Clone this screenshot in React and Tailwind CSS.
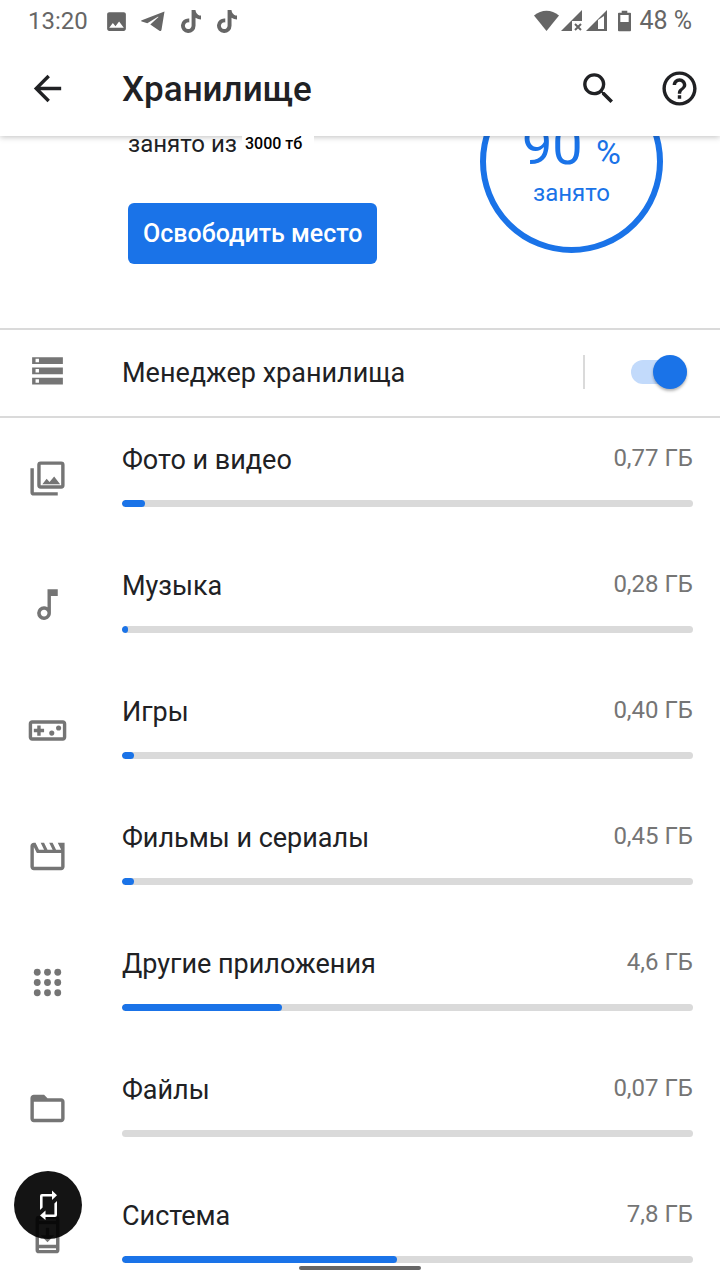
import { useState } from "react";
import {
  MdArrowBack,
  MdFolderOpen,
  MdHelpOutline,
  MdImage,
  MdOutlineMovie,
  MdOutlineMusicNote,
  MdOutlineVideogameAsset,
  MdSearch,
} from "react-icons/md";
import { FaTiktok } from "react-icons/fa";

const PhotosIcon = ({ className }) => (
  <svg viewBox="0 0 24 24" className={className} fill="currentColor">
    <path
      fillRule="evenodd"
      d="M8 2h12a2 2 0 0 1 2 2v12a2 2 0 0 1-2 2H8a2 2 0 0 1-2-2V4a2 2 0 0 1 2-2zm0 2v12h12V4H8z"
    />
    <path d="M2 6h2v14h14v2H4a2 2 0 0 1-2-2V6z" />
    <path d="M9 15.300l2.500-3.200 1.700 2 2.700-3.300 3.500 4.500z" />
  </svg>
);

const StorageIcon = ({ className }) => (
  <svg viewBox="0 0 24 24" className={className} fill="currentColor">
    <path
      fillRule="evenodd"
      d="M3 3h18v4H3zM5 4v2h2V4zM3 9h18v4H3zM5 10v2h2v-2zM3 15h18v4H3zM5 16v2h2v-2z"
    />
  </svg>
);

const AppsIcon = ({ className }) => (
  <svg viewBox="0 0 24 24" className={className} fill="currentColor">
    {[6, 12, 18].map((y) =>
      [6, 12, 18].map((x) => <circle key={`${x}-${y}`} cx={x} cy={y} r="2" />)
    )}
  </svg>
);

const SystemIcon = ({ className }) => (
  <svg viewBox="0 0 24 24" className={className} fill="currentColor">
    <path
      fillRule="evenodd"
      d="M7 1h10a2 2 0 0 1 2 2v18a2 2 0 0 1-2 2H7a2 2 0 0 1-2-2V3a2 2 0 0 1 2-2zm0 2v1h10V3zm0 3v12h10V6zm0 14v1h10v-1z"
    />
    <path d="M16 12.500h-3V8h-2v4.500H8l4 4z" />
  </svg>
);

const TelegramIcon = ({ className }) => (
  <svg viewBox="0 0 24 20" className={className} fill="currentColor">
    <path d="M23.500 0.500 0.800 9.300c-.9.400-.9 1 0 1.300l5.500 1.700L16.500 5.900c.7-.4 1.200-.1.700.4L9.300 13.500l9.100 6.200c1 .6 1.800.3 2.100-1z" />
  </svg>
);

const SignalIcons = ({ className }) => (
  <svg viewBox="0 0 74 22" className={className} fill="currentColor">
    {/* wifi */}
    <path d="M0 5.500C7.500-1 17.500-1 25 5.500L12.500 21z" />
    {/* first sim, no network */}
    <path d="M48 0v11H38v10H27z" />
    <path d="M41 14l6 6M47 14l-6 6" stroke="currentColor" strokeWidth="2" />
    {/* second sim */}
    <path fillRule="evenodd" d="M73 0v21H52zM70 6 64 10v9h6z" />
  </svg>
);

const BatteryIcon = ({ className }) => (
  <svg viewBox="0 0 14 22" className={className} fill="currentColor">
    <path
      fillRule="evenodd"
      d="M4 0h6v2h3a1 1 0 0 1 1 1v18a1 1 0 0 1-1 1H1a1 1 0 0 1-1-1V3a1 1 0 0 1 1-1h3zM2.500 4.500V12h9V4.500z"
    />
  </svg>
);

const RotateIcon = ({ className }) => (
  <svg viewBox="0 0 18 30" className={className} fill="currentColor">
    <path d="M1 20V6a2 2 0 0 1 2-2h10V.500l5 4.700-5 4.800V6.600H3.600V17.500z" />
    <path d="M18 11v14a2 2 0 0 1-2 2H6.500v3L1 25.500l5.500-5v3.900h8.900V13.500z" />
  </svg>
);

const categories = [
  { name: "Фото и видео", size: "0,77 ГБ", percent: 4, icon: PhotosIcon },
  { name: "Музыка", size: "0,28 ГБ", percent: 1, icon: MdOutlineMusicNote },
  { name: "Игры", size: "0,40 ГБ", percent: 2.1, icon: MdOutlineVideogameAsset },
  { name: "Фильмы и сериалы", size: "0,45 ГБ", percent: 2.1, icon: MdOutlineMovie },
  { name: "Другие приложения", size: "4,6 ГБ", percent: 28, icon: AppsIcon },
  { name: "Файлы", size: "0,07 ГБ", percent: 0, icon: MdFolderOpen },
  { name: "Система", size: "7,8 ГБ", percent: 48.2, icon: SystemIcon },
];

function StatusBar() {
  return (
    <div className="flex h-[42px] items-center justify-between pl-7 pr-7 text-2xl text-[#666]">
      <div className="flex items-center">
        <span className="w-[76px]">13:20</span>
        <MdImage className="size-[25px]" />
        <TelegramIcon className="ml-3 h-5 w-6" />
        <FaTiktok className="ml-4 h-[23px] w-5" />
        <FaTiktok className="ml-4 h-[23px] w-5" />
      </div>
      <div className="flex items-center">
        <SignalIcons className="h-[22px] w-[74px]" />
        <BatteryIcon className="ml-[10px] h-[22px] w-[13px]" />
        <span className="ml-2 text-[25px]">48 %</span>
      </div>
    </div>
  );
}

function Header() {
  return (
    <header className="relative z-10 bg-white shadow-[0_1px_6px_rgba(0,0,0,0.25)]">
      <StatusBar />
      <div className="flex h-[94px] items-center pl-[27px] pr-5 pb-[2px]">
        <button aria-label="Назад">
          <MdArrowBack className="size-[41px]" />
        </button>
        <h1 className="ml-[54px] flex-1 pt-1 text-[35px] font-medium">Хранилище</h1>
        <button aria-label="Поиск">
          <MdSearch className="size-[41px]" />
        </button>
        <button aria-label="Справка" className="ml-10">
          <MdHelpOutline className="size-[41px]" />
        </button>
      </div>
    </header>
  );
}

function Category({ name, size, percent, icon: Icon }) {
  return (
    <li className="flex h-[126px] pl-[27px] pr-[27px]">
      <Icon className="mt-10 size-[41px] shrink-0 text-[#757575]" />
      <div className="ml-[54px] flex-1 pt-6">
        <div className="flex items-start justify-between">
          <span className="text-[27px] leading-9">{name}</span>
          <span className="text-2xl leading-8 text-[#757575]">{size}</span>
        </div>
        <div className="mt-[22px] h-[7px] overflow-hidden rounded-full bg-[#dadada]">
          <div className="h-full rounded-full bg-[#1a73e8]" style={{ width: `${percent}%` }} />
        </div>
      </div>
    </li>
  );
}

export default function App() {
  const [managerOn, setManagerOn] = useState(true);

  return (
    <div className="h-screen overflow-hidden bg-white font-['Roboto','Noto_Sans',sans-serif] text-[#202124]">
      <Header />

      {/* Summary is scrolled partly under the header */}
      <main className="-mt-[66px]">
        <section className="flex justify-between border-b-2 border-[#dadada] pb-16 pl-32 pr-[57px]">
          <div className="flex flex-col justify-end">
            <p className="flex items-center text-2xl">
              занято из
              <span className="relative z-20 ml-[5px] w-[72px] bg-white pl-[3px] text-base leading-4 font-medium text-black">
                3000 тб
              </span>
            </p>
            <button className="mt-[43px] h-[61px] rounded-md bg-[#1a73e8] px-[15px] text-[25px] font-medium text-white">
              Освободить место
            </button>
          </div>
          <div className="mb-[11px] flex size-[183px] flex-col items-center justify-end rounded-full border-6 border-[#1a73e8] pb-[38px] text-[#1a73e8]">
            <p className="mb-1 text-[54px] leading-none">
              90 <span className="text-[34px]">%</span>
            </p>
            <p className="text-2xl">занято</p>
          </div>
        </section>

        <section className="flex h-[88px] items-center border-b-2 border-[#dadada] pl-[27px] pr-[33px] pb-[2px]">
          <StorageIcon className="size-[41px] text-[#757575]" />
          <label htmlFor="manager" className="ml-[54px] flex-1 pt-[2px] text-[27px]">
            Менеджер хранилища
          </label>
          <span className="h-[34px] w-[2px] bg-[#dadada]" />
          <input
            id="manager"
            type="checkbox"
            role="switch"
            checked={managerOn}
            onChange={(e) => setManagerOn(e.target.checked)}
            className="ml-[46px] flex h-6 w-14 appearance-none items-center rounded-full bg-[#dadada] before:size-[34px] before:shrink-0 before:rounded-full before:bg-white before:shadow-[0_2px_3px_rgba(0,0,0,0.3)] checked:justify-end checked:bg-[#c2dafb] checked:before:bg-[#1a73e8]"
          />
        </section>

        <ul>
          {categories.map((category) => (
            <Category key={category.name} {...category} />
          ))}
        </ul>
      </main>

      <button
        aria-label="Повернуть экран"
        className="fixed bottom-[41px] left-[14px] z-20 flex size-[68px] items-center justify-center rounded-full bg-black/92 text-white"
      >
        <RotateIcon className="h-[30px] w-[18px]" />
      </button>

      {/* Gesture bar */}
      <div className="fixed bottom-[10px] left-1/2 h-1 w-[122px] -translate-x-1/2 rounded-full bg-[#666]" />
    </div>
  );
}
